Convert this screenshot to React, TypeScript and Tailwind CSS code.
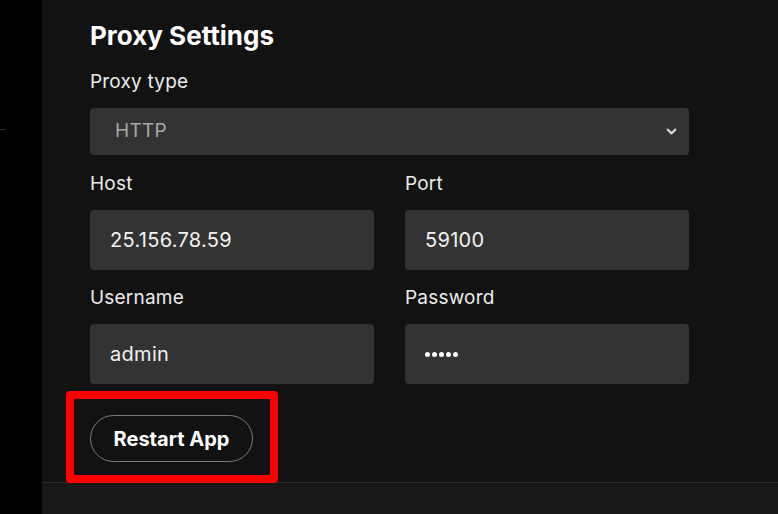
import React from "react";
import { ChevronDown } from "lucide-react";

const font = { fontFamily: "Inter, 'Noto Sans', sans-serif" };

const Field = ({ label, value, secret }: { label: string; value: string; secret?: boolean }) => (
  <div>
    <div className="text-[19px] leading-[24px] tracking-[0.2px] text-[#ececec]">{label}</div>
    <div className="mt-[14px] flex h-[60px] items-center rounded-[4px] bg-[#333333] px-5">
      {secret ? (
        <div className="flex gap-[2px]">
          {[0, 1, 2, 3, 4].map((i) => (
            <span key={i} className="h-[5px] w-[5px] rounded-full bg-white" />
          ))}
        </div>
      ) : (
        <span className="text-[20px] tracking-[0.3px] text-[#f2f2f2]">{value}</span>
      )}
    </div>
  </div>
);

const App = () => {
  return (
    <div className="flex h-[514px] w-[778px] overflow-hidden bg-black" style={font}>
      {/* left strip */}
      <div className="w-[42px] shrink-0 bg-black pt-[129px]">
        <div className="h-px w-[6px] bg-[#333333]" />
      </div>

      <div className="relative flex flex-1 flex-col bg-[#121212]">
        <div className="pl-12 pt-5">
          <div className="w-[599px]">
            <h2 className="text-[26px] font-bold leading-[32px] text-white">Proxy Settings</h2>

            <div className="mt-[18px] text-[19px] leading-[24px] tracking-[0.2px] text-[#ececec]">Proxy type</div>
            <div className="mt-[14px] flex h-[47px] items-center justify-between rounded-[4px] bg-[#333333] pl-[25px] pr-[10px]">
              <span className="text-[19px] tracking-[0.3px] text-[#a8a8a8]">HTTP</span>
              <ChevronDown size={15} strokeWidth={3.5} className="text-[#d0d0d0]" />
            </div>

            <div className="mt-[17px] grid grid-cols-2 gap-x-[31px]">
              <Field label="Host" value="25.156.78.59" />
              <Field label="Port" value="59100" />
            </div>

            <div className="mt-[16px] grid grid-cols-2 gap-x-[31px]">
              <Field label="Username" value="admin" />
              <Field label="Password" value="" secret />
            </div>

            <button className="mt-[31px] h-[47px] w-[163px] rounded-full border border-[#7a7a7a] text-[20px] font-bold text-white">
              Restart App
            </button>
          </div>
        </div>

        <div className="mt-auto h-[32px] border-t border-[#2a2a2a] bg-[#181818]" />

        {/* highlight annotation */}
        <div className="absolute left-[24px] top-[391px] h-[92px] w-[212px] rounded-[4px] border-[8px] border-[#ff0000]" />
      </div>
    </div>
  );
};

export default App;
